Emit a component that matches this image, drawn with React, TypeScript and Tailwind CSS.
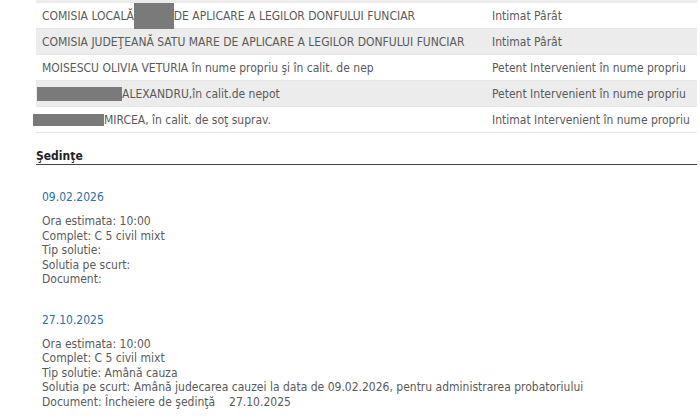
import React from "react";

interface Parte {
  nume: React.ReactNode;
  calitate: string;
}

const Redact = ({ w, h, ml = 0 }: { w: number; h: number; ml?: number }) => (
  <span
    className="inline-block align-middle bg-[#7a7a7a]"
    style={{ width: w, height: h, marginLeft: ml }}
  />
);

const parti: Parte[] = [
  {
    nume: (
      <>
        COMISIA LOCALĂ<Redact w={40} h={26} />DE APLICARE A LEGILOR DONFULUI FUNCIAR
      </>
    ),
    calitate: "Intimat Pârât",
  },
  {
    nume: "COMISIA JUDEŢEANĂ SATU MARE DE APLICARE A LEGILOR DONFULUI FUNCIAR",
    calitate: "Intimat Pârât",
  },
  {
    nume: "MOISESCU OLIVIA VETURIA în nume propriu şi în calit. de nep",
    calitate: "Petent Intervenient în nume propriu",
  },
  {
    nume: (
      <>
        <Redact w={85} h={14} ml={-5} />ALEXANDRU,în calit.de nepot
      </>
    ),
    calitate: "Petent Intervenient în nume propriu",
  },
  {
    nume: (
      <>
        <Redact w={71} h={12} ml={-9} />MIRCEA, în calit. de soţ suprav.
      </>
    ),
    calitate: "Intimat Intervenient în nume propriu",
  },
];

interface Sedinta {
  data: string;
  complet: string;
  tip: string;
  solutie: string;
  document: React.ReactNode;
}

const sedinte: Sedinta[] = [
  {
    data: "09.02.2026",
    complet: "C 5 civil mixt",
    tip: "",
    solutie: "",
    document: "",
  },
  {
    data: "27.10.2025",
    complet: "C 5 civil mixt",
    tip: "Amână cauza",
    solutie:
      "Amână judecarea cauzei la data de 09.02.2026, pentru administrarea probatoriului",
    document: (
      <>
        Încheiere de şedinţă<span className="inline-block w-[14px]" />27.10.2025
      </>
    ),
  },
];

export default function App() {
  return (
    <div
      className="w-[700px] h-[416px] overflow-hidden bg-white text-[12px] text-[#5a5a5a]"
      style={{ fontFamily: '"DejaVu Sans Condensed", "DejaVu Sans", sans-serif' }}
    >
      <div className="pl-[36px] pr-[3px]">
        <div className="h-[3px] bg-[#ececec]" />
        {parti.map((p, i) => (
          <div
            key={i}
            className={`flex items-center h-[26px] border-b border-[#e6e6e6] ${
              i % 2 === 1 ? "bg-[#ececec]" : "bg-white"
            }`}
          >
            <div className="w-[456px] pl-[6px] whitespace-nowrap">{p.nume}</div>
            <div className="whitespace-nowrap">{p.calitate}</div>
          </div>
        ))}

        <div className="mt-[16px] pb-[1px] border-b border-[#444]">
          <h3 className="font-bold text-[#222] text-[12px] leading-[14px]">Şedinţe</h3>
        </div>

        <div className="pl-[6px]">
          {sedinte.map((s, i) => (
            <div key={i} className={i === 0 ? "mt-[24px]" : "mt-[25px]"}>
              <div className="text-[#2b6ea8] leading-[16px]">{s.data}</div>
              <div className="mt-[9px] leading-[14.5px]">
                <div>Ora estimata: 10:00</div>
                <div>Complet: {s.complet}</div>
                <div>Tip solutie: {s.tip}</div>
                <div>Solutia pe scurt: {s.solutie}</div>
                <div>Document: {s.document}</div>
              </div>
            </div>
          ))}
        </div>
      </div>
    </div>
  );
}
